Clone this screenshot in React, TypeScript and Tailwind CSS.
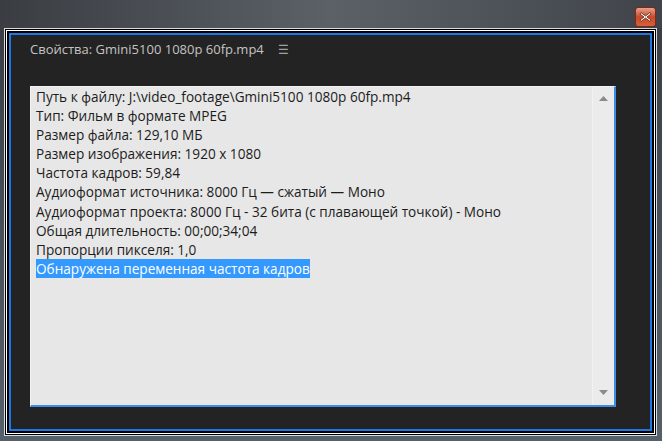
const lines = [
  'Путь к файлу: J:\\video_footage\\Gmini5100 1080p 60fp.mp4',
  'Тип: Фильм в формате MPEG',
  'Размер файла: 129,10 МБ',
  'Размер изображения: 1920 x 1080',
  'Частота кадров: 59,84',
  'Аудиоформат источника: 8000 Гц — сжатый — Моно',
  'Аудиоформат проекта: 8000 Гц - 32 бита (с плавающей точкой) - Моно',
  'Общая длительность: 00;00;34;04',
  'Пропорции пикселя: 1,0',
];

function CloseButton() {
  return (
    <div className="w-[21px] h-[20px] rounded-[3px] border border-[#7a2a18] bg-gradient-to-b from-[#e8a08a] via-[#c8482a] to-[#d8603a] flex items-center justify-center">
      <svg width="13" height="12" viewBox="0 0 13 12">
        <path d="M2 1.5 L6.5 5 L11 1.5 L12 3 L8 6 L12 9 L11 10.5 L6.5 7 L2 10.5 L1 9 L5 6 L1 3 Z" fill="#ffffff" stroke="#5a2010" strokeWidth="0.8" />
      </svg>
    </div>
  );
}

export default function App() {
  return (
    <div
      className="w-[662px] h-[441px] flex flex-col bg-gradient-to-b from-[#2e3237] via-[#4a4e54] to-[#3a3e44] overflow-hidden"
      style={{ fontFamily: '"Open Sans", "Noto Sans", sans-serif' }}
    >
      <div className="h-[28px] flex justify-end items-start pt-[7px] pr-[6px] bg-gradient-to-r from-[#3a3e43] via-[#5c6168] to-[#40444a]">
        <CloseButton />
      </div>
      <div className="flex-1 flex pl-[4px] pr-[5px] pb-[5px] bg-gradient-to-b from-[#3a3e44] to-[#56606a]">
        <div className="flex-1 flex border border-[#d8dce0] bg-black">
          <div className="flex-1 flex border border-black">
            <div className="flex-1 flex border border-white">
              <div className="flex-1 flex border-2 border-black">
                <div className="flex-1 flex flex-col border-2 border-[#1c78e4] bg-[#232323]">
                  <div className="h-[51px] flex items-start pt-[5px] pl-[19px] gap-[14px] text-[13px] text-[#c4c4c4]">
                    <span>Свойства: Gmini5100 1080p 60fp.mp4</span>
                    <span className="text-[12px] leading-[20px] text-[#a0a0a0]">☰</span>
                  </div>
                  <div className="flex-1 flex pl-[19px] pr-[34px] pb-[22px]">
                    <div className="flex-1 flex bg-[#e7e7e7] border-t border-l border-[#f4f4f4] border-r-2 border-b-2 border-r-[#3d8de4] border-b-[#3d8de4]">
                      <div className="flex-1 pl-[5px] pt-0 text-[13.6px] leading-[19.1px] text-[#1c1c1c]">
                        {lines.map((l) => (
                          <div key={l}>{l}</div>
                        ))}
                        <div>
                          <span className="inline-block bg-[#3399ff] text-white">Обнаружена переменная частота кадров</span>
                        </div>
                      </div>
                      <div className="w-[22px] flex flex-col justify-between items-center pt-[9px] pb-[10px] border-l border-[#f2f2f2] bg-[#ebebeb]">
                        <svg width="9" height="5" viewBox="0 0 9 5"><path d="M0 5 L4.5 0 L9 5 Z" fill="#8a8a8a" /></svg>
                        <svg width="9" height="5" viewBox="0 0 9 5"><path d="M0 0 L9 0 L4.5 5 Z" fill="#8a8a8a" /></svg>
                      </div>
                    </div>
                  </div>
                </div>
              </div>
            </div>
          </div>
        </div>
      </div>
    </div>
  );
}
